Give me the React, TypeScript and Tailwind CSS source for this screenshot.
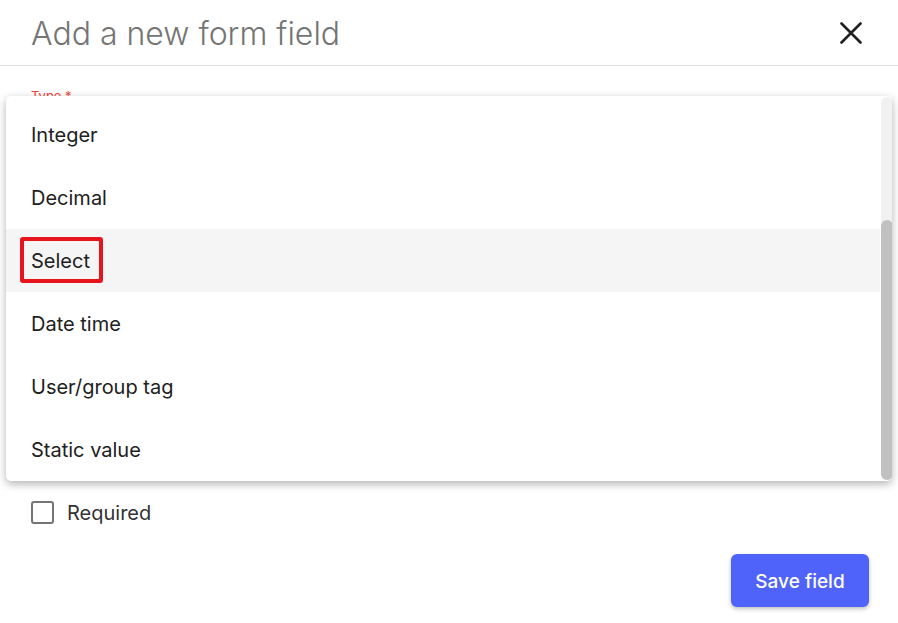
import React from 'react';

const options = ['Integer', 'Decimal', 'Select', 'Date time', 'User/group tag', 'Static value'];

export default function App() {
  return (
    <div
      className="relative w-[898px] h-[623px] bg-white overflow-hidden text-[#212121] flex flex-col"
      style={{ fontFamily: 'Inter, "Noto Sans", sans-serif' }}
    >
      {/* header */}
      <div className="h-[66px] shrink-0 border-b border-[#e0e0e0] flex items-center justify-between pl-[31px] pr-[36px]">
        <h1 className="text-[32px] font-light text-[#757575] leading-none pt-[2px]">Add a new form field</h1>
        <button className="w-[22px] h-[22px] flex items-center justify-center">
          <svg width="22" height="22" viewBox="0 0 22 22">
            <path d="M1.5 1.5 L20.5 20.5 M20.5 1.5 L1.5 20.5" stroke="#212121" strokeWidth="2.6" strokeLinecap="round" />
          </svg>
        </button>
      </div>

      {/* body */}
      <div className="flex-1 flex flex-col px-[31px] pt-[22px]">
        <div className="text-[13px] text-[#f44336] leading-4">Type *</div>
        <div className="h-[383px]" />
        <label className="flex items-center gap-[13px] mt-[14px]">
          <span className="w-[23px] h-[23px] border-[2.5px] border-[#757575] rounded-[3px]" />
          <span className="text-[20px] text-[#333333] leading-none">Required</span>
        </label>
        <div className="flex-1 flex items-end justify-end pb-[16px]">
          <button className="w-[138px] h-[53px] -mr-[2px] pt-[3px] rounded-[6px] bg-[#4f63fb] text-white text-[19px] font-medium shadow-[0_2px_4px_rgba(0,0,0,0.25)]">
            Save field
          </button>
        </div>
      </div>

      {/* dropdown menu overlay */}
      <div className="absolute left-[6px] top-[96px] w-[886px] h-[385px] bg-white rounded-[5px] shadow-[0_3px_8px_rgba(0,0,0,0.3)] pt-[7px] overflow-hidden">
        {options.map((o) => (
          <div
            key={o}
            className={`relative h-[63px] mr-[12px] flex items-center pl-[25px] text-[20px] ${o === 'Select' ? 'bg-[#f5f5f5]' : ''}`}
          >
            {o}
            {o === 'Select' && (
              <span className="absolute left-[14px] top-[8px] w-[83px] h-[46px] border-4 border-[#e8141c] rounded-[3px]" />
            )}
          </div>
        ))}
        <div className="absolute right-[-1px] top-[1px] w-[12px] h-[383px] bg-[#f1f1f1] rounded-[6px]">
          <div className="absolute left-0 right-0 bottom-0 h-[260px] bg-[#c1c1c1] rounded-[6px]" />
        </div>
      </div>
    </div>
  );
}
